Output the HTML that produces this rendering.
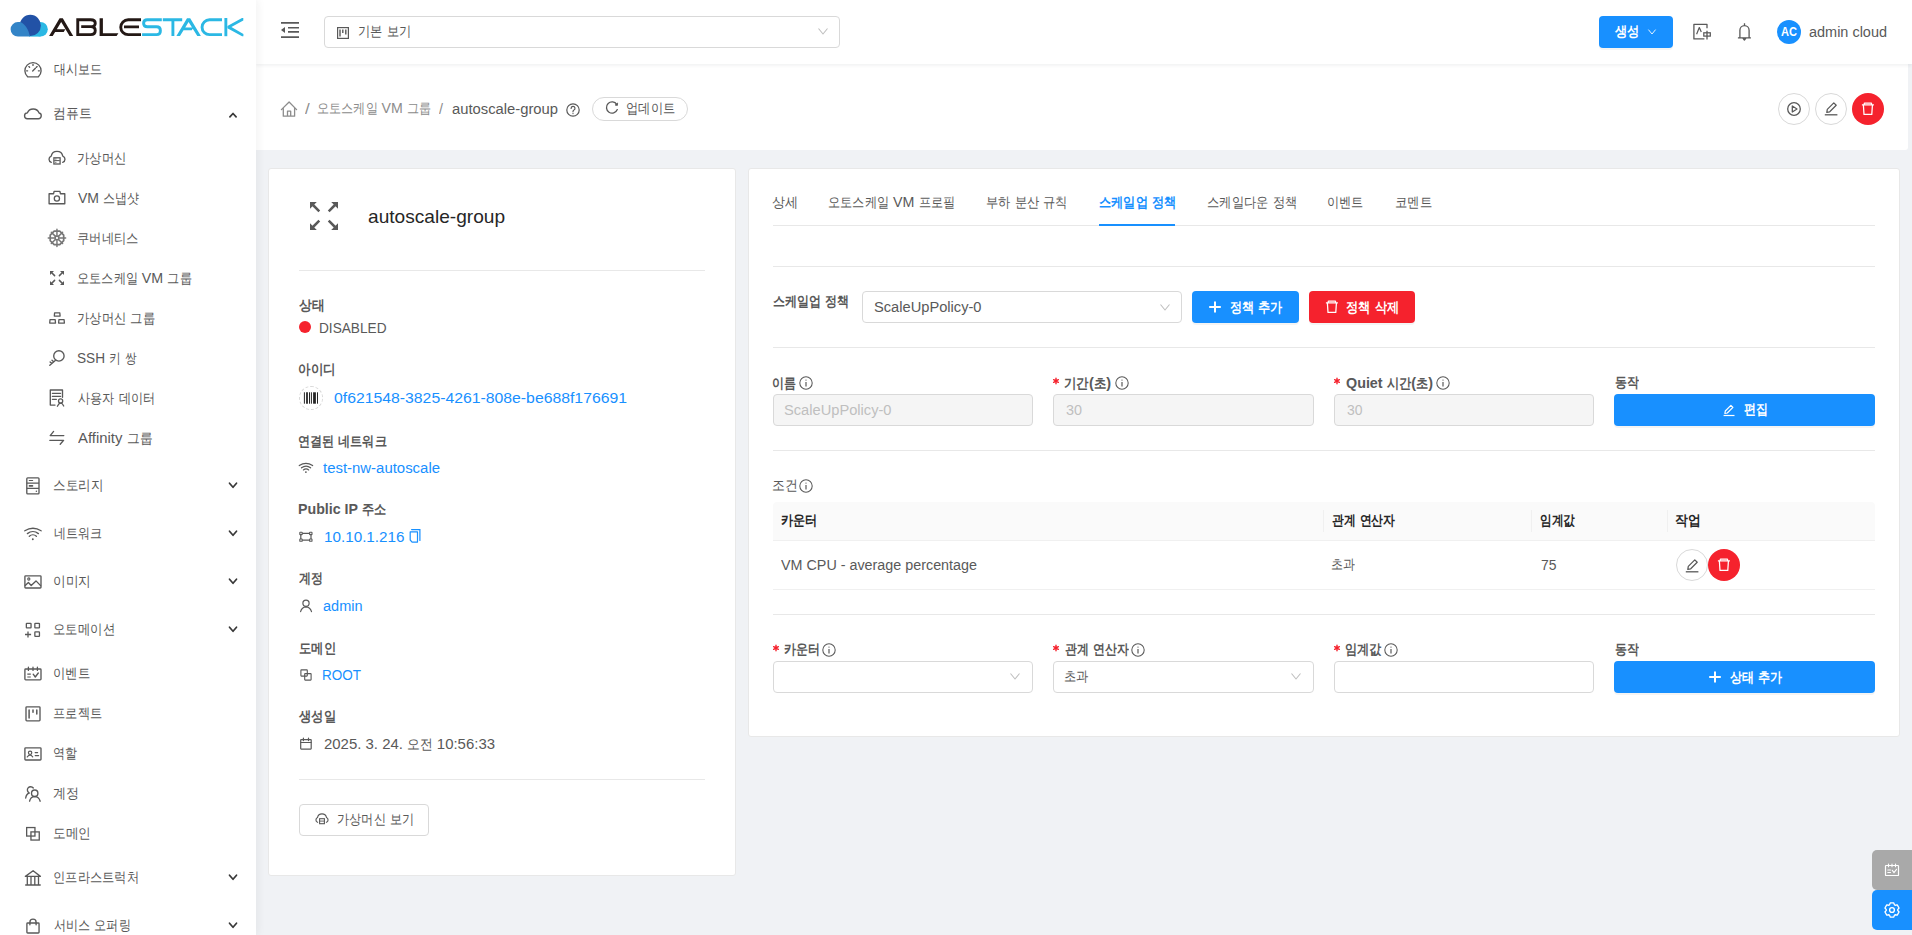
<!DOCTYPE html>
<html lang="ko"><head><meta charset="utf-8"><title>autoscale-group</title>
<style>
html,body{margin:0;padding:0;width:1912px;height:935px;overflow:hidden;font-family:"Liberation Sans",sans-serif;}
svg{overflow:visible}
</style></head><body>
<div style="position:absolute;left:0px;top:0px;width:1912px;height:935px;background:#f0f2f5"></div>
<div style="position:absolute;left:256px;top:64px;width:1652px;height:86px;background:#fff;border-bottom-right-radius:3px"></div>
<div style="position:absolute;left:256px;top:0px;width:1656px;height:64px;background:#fff;box-shadow:0 1px 4px rgba(0,21,41,.08)"></div>
<div style="position:absolute;left:0px;top:0px;width:256px;height:935px;background:#fff;box-shadow:2px 0 8px 0 rgba(29,35,41,.06);z-index:2"></div>
<div style="position:absolute;left:0;top:0;width:256px;height:935px;z-index:3">
<svg style="position:absolute;left:0px;top:0px;" width="256" height="50" viewBox="0 0 256 50" fill="none" stroke="#595959" color="#595959">
  <g stroke="none">
   <circle cx="40.45" cy="29.25" r="7.35" fill="#2bb8e4"/>
   <rect x="29" y="29" width="11.5" height="7.6" fill="#2bb8e4"/>
   <circle cx="30.3" cy="25.4" r="10.6" fill="#2252a6"/>
   <path d="M17.9 36.6 A7.3 7.3 0 0 1 17.9 22 Q19.2 21.8 20.2 22.1 C24.8 23.6 28.8 29.5 29.9 36.6 Z" fill="#3384c7"/>
  </g>
  <g fill="#231815" stroke="none">
   <path d="M49.1 36.1 L59.6 18.3 H62.8 L73.2 36.1 H69.6 L61.2 21.9 L52.7 36.1 Z M54.6 29.3 H65.4 L63.7 32.1 H52.9 Z"/>
   <path d="M99.6 18.3 H102.9 V33.2 H118.4 L116.6 36.1 H99.6 Z"/>
  </g>
  <g stroke="#231815" stroke-width="2.9" fill="none">
   <path d="M77.75 18.3 V36.1 M77.75 19.75 H90.6 Q95.25 19.75 95.25 23.2 Q95.25 26.65 90.8 26.65 H81.2 M90.8 26.65 Q95.25 26.65 95.25 30.6 Q95.25 34.65 90.6 34.65 H77.75"/>
   <path d="M141 19.75 H128.2 A7.45 7.45 0 0 0 128.2 34.65 H141 M124 26.9 H139"/>
  </g>
  <g stroke="#2bb8e4" stroke-width="2.9" fill="none">
   <path d="M161.8 19.75 H147.3 Q143.6 19.75 143.6 23.3 Q143.6 26.8 147.3 26.8 H156.6 Q160.4 26.8 160.4 30.7 Q160.4 34.65 156.6 34.65 H142.1"/>
   <path d="M162.8 19.75 H182.2 M172.9 19.75 V36.1"/>
   <path d="M222 19.75 H209.5 A7.45 7.45 0 0 0 209.5 34.65 H222"/>
   <path d="M225.85 18 V36.2"/>
  </g>
  <g fill="#2bb8e4" stroke="none">
   <path d="M176.4 36.1 L187 18.3 H190.2 L200.9 36.1 H197.3 L188.6 21.9 L180 36.1 Z M183.3 27.4 H193.4 L191.8 30.2 H181.6 Z"/>
   <path d="M227.4 26 L242 17.9 H243.3 L243.3 20.4 L231.4 27.1 L243.4 33.9 V36.3 H242.1 L227.4 28.3 Z"/>
  </g></svg>
<svg style="position:absolute;left:20px;top:56px;" width="26" height="26" viewBox="0 0 26 26" fill="none" stroke="#595959" color="#595959"><path d="M7.6 20.8 A8.1 8.1 0 1 1 18.4 20.8 Z" stroke-width="1.35" stroke-linecap="round" stroke-linejoin="round"/><path d="M13 8.3 V9.4 M8.9 10.6 L9.6 11.3 M17.1 10.6 L16.4 11.3 M6.6 14.8 H7.6 M19.4 14.8 H18.4 M12.7 15 L15.4 12.3" stroke-width="1.35" stroke-linecap="round" stroke-linejoin="round"/></svg>
<div style="position:absolute;left:54.00px;top:62.2px;font-size:14px;line-height:14px;color:#595959;white-space:nowrap;transform:scaleX(1.0004);transform-origin:0 0;"><span style="display:inline-flex;justify-content:center;width:12.0px;transform:scaleX(.857)">대</span><span style="display:inline-flex;justify-content:center;width:12.0px;transform:scaleX(.857)">시</span><span style="display:inline-flex;justify-content:center;width:12.0px;transform:scaleX(.857)">보</span><span style="display:inline-flex;justify-content:center;width:12.0px;transform:scaleX(.857)">드</span></div>
<svg style="position:absolute;left:20px;top:100px;" width="26" height="26" viewBox="0 0 26 26" fill="none" stroke="#595959" color="#595959"><path d="M7.6 18.7 H18.4 A2.9 2.9 0 0 0 19.1 13 A6.4 6.4 0 0 0 7.3 12.9 A2.9 2.9 0 0 0 7.6 18.7 Z" stroke-width="1.35" stroke-linecap="round" stroke-linejoin="round"/></svg>
<div style="position:absolute;left:52.99px;top:105.8px;font-size:14px;line-height:14px;color:#595959;white-space:nowrap;transform:scaleX(1.0710);transform-origin:0 0;"><span style="display:inline-flex;justify-content:center;width:12.0px;transform:scaleX(.857)">컴</span><span style="display:inline-flex;justify-content:center;width:12.0px;transform:scaleX(.857)">퓨</span><span style="display:inline-flex;justify-content:center;width:12.0px;transform:scaleX(.857)">트</span></div>
<svg style="position:absolute;left:228px;top:111.5px;" width="10" height="7" viewBox="0 0 10 7" fill="none" stroke="#383838" color="#383838"><path d="M1.9 4.9 L5 1.5 L8.1 4.9" stroke-width="1.7" stroke-linecap="round" stroke-linejoin="round"/></svg>
<svg style="position:absolute;left:44px;top:146px;" width="26" height="26" viewBox="0 0 26 26" fill="none" stroke="#595959" color="#595959"><path d="M7.3 16.3 A3.2 3.2 0 0 1 7.2 10.2 A5.9 5.9 0 0 1 18.8 10.2 A3.2 3.2 0 0 1 18.7 16.3" stroke-width="1.35" stroke-linecap="round" stroke-linejoin="round"/><rect x="9.9" y="11.8" width="6.2" height="6.2" stroke-width="1.3"/><path d="M10.2 14.6 H15.8" stroke-width="1"/><path d="M11 13 H12.5 M11 16.3 H12.5" stroke-width="0.8"/></svg>
<div style="position:absolute;left:77.02px;top:150.5px;font-size:14px;line-height:14px;color:#595959;white-space:nowrap;transform:scaleX(1.0327);transform-origin:0 0;"><span style="display:inline-flex;justify-content:center;width:12.0px;transform:scaleX(.857)">가</span><span style="display:inline-flex;justify-content:center;width:12.0px;transform:scaleX(.857)">상</span><span style="display:inline-flex;justify-content:center;width:12.0px;transform:scaleX(.857)">머</span><span style="display:inline-flex;justify-content:center;width:12.0px;transform:scaleX(.857)">신</span></div>
<svg style="position:absolute;left:44px;top:185px;" width="26" height="26" viewBox="0 0 26 26" fill="none" stroke="#595959" color="#595959"><path d="M5.1 8.7 H9.6 L10.1 6.3 H15.9 L16.4 8.7 H20.8 V18.7 H5.1 Z" stroke-width="1.35" stroke-linecap="round" stroke-linejoin="round"/><circle cx="12.9" cy="13.5" r="2.6" stroke-width="1.3"/></svg>
<div style="position:absolute;left:78.00px;top:190.5px;font-size:14px;line-height:14px;color:#595959;white-space:nowrap;transform:scaleX(1.0019);transform-origin:0 0;">VM <span style="display:inline-flex;justify-content:center;width:12.0px;transform:scaleX(.857)">스</span><span style="display:inline-flex;justify-content:center;width:12.0px;transform:scaleX(.857)">냅</span><span style="display:inline-flex;justify-content:center;width:12.0px;transform:scaleX(.857)">샷</span></div>
<svg style="position:absolute;left:44px;top:226px;" width="26" height="26" viewBox="0 0 26 26" fill="none" stroke="#595959" color="#595959"><g opacity=".82"><path d="M15.74 5.16 L19.69 9.11 L19.69 14.69 L15.74 18.64 L10.16 18.64 L6.21 14.69 L6.21 9.11 L10.16 5.16 Z" stroke-width="1.7" stroke-linejoin="round"/><path d="M12.95 10.10 L12.95 3.20 M14.22 10.63 L18.61 6.24 M14.75 11.90 L21.65 11.90 M14.22 13.17 L18.61 17.56 M12.95 13.70 L12.95 20.60 M11.68 13.17 L7.29 17.56 M11.15 11.90 L4.25 11.90 M11.68 10.63 L7.29 6.24" stroke-width="1.45" stroke-linecap="round"/><rect x="11.25" y="10.2" width="3.4" height="3.4" stroke-width="1.3"/></g></svg>
<div style="position:absolute;left:76.99px;top:230.5px;font-size:14px;line-height:14px;color:#595959;white-space:nowrap;transform:scaleX(1.0253);transform-origin:0 0;"><span style="display:inline-flex;justify-content:center;width:12.0px;transform:scaleX(.857)">쿠</span><span style="display:inline-flex;justify-content:center;width:12.0px;transform:scaleX(.857)">버</span><span style="display:inline-flex;justify-content:center;width:12.0px;transform:scaleX(.857)">네</span><span style="display:inline-flex;justify-content:center;width:12.0px;transform:scaleX(.857)">티</span><span style="display:inline-flex;justify-content:center;width:12.0px;transform:scaleX(.857)">스</span></div>
<svg style="position:absolute;left:44px;top:265px;" width="26" height="26" viewBox="0 0 26 26" fill="none" stroke="#595959" color="#595959"><path d="M6 6 H10 L6 10 Z M20 6 H16 L20 10 Z M6 20 H10 L6 16 Z M20 20 H16 L20 16 Z" fill="currentColor" stroke="none"/><path d="M7.5 7.5 L10.6 10.6 M18.5 7.5 L15.4 10.6 M7.5 18.5 L10.6 15.4 M18.5 18.5 L15.4 15.4" stroke-width="1.5" stroke-linecap="round"/></svg>
<div style="position:absolute;left:77.01px;top:270.5px;font-size:14px;line-height:14px;color:#595959;white-space:nowrap;transform:scaleX(1.0154);transform-origin:0 0;"><span style="display:inline-flex;justify-content:center;width:12.0px;transform:scaleX(.857)">오</span><span style="display:inline-flex;justify-content:center;width:12.0px;transform:scaleX(.857)">토</span><span style="display:inline-flex;justify-content:center;width:12.0px;transform:scaleX(.857)">스</span><span style="display:inline-flex;justify-content:center;width:12.0px;transform:scaleX(.857)">케</span><span style="display:inline-flex;justify-content:center;width:12.0px;transform:scaleX(.857)">일</span> VM <span style="display:inline-flex;justify-content:center;width:12.0px;transform:scaleX(.857)">그</span><span style="display:inline-flex;justify-content:center;width:12.0px;transform:scaleX(.857)">룹</span></div>
<svg style="position:absolute;left:44px;top:305px;" width="26" height="26" viewBox="0 0 26 26" fill="none" stroke="#595959" color="#595959"><path d="M10.6 7.8 H15.8 L16.1 11.1 H10.3 Z M6 14.7 H11.2 L11.5 18.1 H5.7 Z M14.9 14.7 H20.1 L20.4 18.1 H14.6 Z" stroke-width="1.3" stroke-linejoin="round"/></svg>
<div style="position:absolute;left:76.98px;top:310.5px;font-size:14px;line-height:14px;color:#595959;white-space:nowrap;transform:scaleX(1.0287);transform-origin:0 0;"><span style="display:inline-flex;justify-content:center;width:12.0px;transform:scaleX(.857)">가</span><span style="display:inline-flex;justify-content:center;width:12.0px;transform:scaleX(.857)">상</span><span style="display:inline-flex;justify-content:center;width:12.0px;transform:scaleX(.857)">머</span><span style="display:inline-flex;justify-content:center;width:12.0px;transform:scaleX(.857)">신</span> <span style="display:inline-flex;justify-content:center;width:12.0px;transform:scaleX(.857)">그</span><span style="display:inline-flex;justify-content:center;width:12.0px;transform:scaleX(.857)">룹</span></div>
<svg style="position:absolute;left:44px;top:345px;" width="26" height="26" viewBox="0 0 26 26" fill="none" stroke="#595959" color="#595959"><circle cx="14.9" cy="10.9" r="5.2" stroke-width="1.35" stroke-linecap="round" stroke-linejoin="round"/><path d="M11.3 15.4 L5.8 20.2 M6.1 17 L7.7 18.5 M8 15.3 L9.6 16.8" stroke-width="1.35" stroke-linecap="round" stroke-linejoin="round"/></svg>
<div style="position:absolute;left:77.00px;top:350.5px;font-size:14px;line-height:14px;color:#595959;white-space:nowrap;transform:scaleX(0.9739);transform-origin:0 0;">SSH <span style="display:inline-flex;justify-content:center;width:12.0px;transform:scaleX(.857)">키</span> <span style="display:inline-flex;justify-content:center;width:12.0px;transform:scaleX(.857)">쌍</span></div>
<svg style="position:absolute;left:44px;top:385px;" width="26" height="26" viewBox="0 0 26 26" fill="none" stroke="#595959" color="#595959"><path d="M11 20.1 H6.3 V5 H18.5 V12.2" stroke-width="1.35" stroke-linecap="round" stroke-linejoin="round"/><path d="M8.4 8.3 H16.6 M8.4 11.4 H16.6 M8.4 14.3 H12.4" stroke-width="1.3" stroke-linecap="round"/><circle cx="16.6" cy="16" r="2.1" stroke-width="1.3"/><path d="M13.4 21.2 Q14.8 18.2 16.6 18.2 Q18.4 18.2 19.7 21" stroke-width="1.3" stroke-linecap="round"/></svg>
<div style="position:absolute;left:78.00px;top:390.5px;font-size:14px;line-height:14px;color:#595959;white-space:nowrap;transform:scaleX(1.0148);transform-origin:0 0;"><span style="display:inline-flex;justify-content:center;width:12.0px;transform:scaleX(.857)">사</span><span style="display:inline-flex;justify-content:center;width:12.0px;transform:scaleX(.857)">용</span><span style="display:inline-flex;justify-content:center;width:12.0px;transform:scaleX(.857)">자</span> <span style="display:inline-flex;justify-content:center;width:12.0px;transform:scaleX(.857)">데</span><span style="display:inline-flex;justify-content:center;width:12.0px;transform:scaleX(.857)">이</span><span style="display:inline-flex;justify-content:center;width:12.0px;transform:scaleX(.857)">터</span></div>
<svg style="position:absolute;left:44px;top:425px;" width="26" height="26" viewBox="0 0 26 26" fill="none" stroke="#595959" color="#595959"><path d="M6.2 10.6 H19.8 M6.2 10.6 L9.6 6.4 M5.8 15.3 H19.6 L16.2 19.3" stroke-width="1.35" stroke-linecap="round" stroke-linejoin="round"/></svg>
<div style="position:absolute;left:78.00px;top:430.5px;font-size:14px;line-height:14px;color:#595959;white-space:nowrap;transform:scaleX(1.0624);transform-origin:0 0;">Affinity <span style="display:inline-flex;justify-content:center;width:12.0px;transform:scaleX(.857)">그</span><span style="display:inline-flex;justify-content:center;width:12.0px;transform:scaleX(.857)">룹</span></div>
<svg style="position:absolute;left:20px;top:472px;" width="26" height="26" viewBox="0 0 26 26" fill="none" stroke="#595959" color="#595959"><rect x="6.8" y="5.8" width="12.2" height="16.1" rx="0.9" stroke-width="1.35"/><path d="M6.8 11.2 H19 M6.8 16.4 H19" stroke-width="1.3"/><path d="M9.3 8.5 H12.6" stroke-width="1.2" stroke-linecap="round"/><path d="M9.4 13.9 H12.5" stroke-width="1.6" stroke-linecap="round"/><circle cx="16.4" cy="19.3" r="0.75" fill="currentColor" stroke="none"/></svg>
<div style="position:absolute;left:53.02px;top:477.8px;font-size:14px;line-height:14px;color:#595959;white-space:nowrap;transform:scaleX(1.0435);transform-origin:0 0;"><span style="display:inline-flex;justify-content:center;width:12.0px;transform:scaleX(.857)">스</span><span style="display:inline-flex;justify-content:center;width:12.0px;transform:scaleX(.857)">토</span><span style="display:inline-flex;justify-content:center;width:12.0px;transform:scaleX(.857)">리</span><span style="display:inline-flex;justify-content:center;width:12.0px;transform:scaleX(.857)">지</span></div>
<svg style="position:absolute;left:228px;top:481.7px;" width="10" height="7" viewBox="0 0 10 7" fill="none" stroke="#383838" color="#383838"><path d="M1.5 1.2 L5 5.3 L8.5 1.2" stroke-width="1.7" stroke-linecap="round" stroke-linejoin="round"/></svg>
<svg style="position:absolute;left:20px;top:520px;" width="26" height="26" viewBox="0 0 26 26" fill="none" stroke="#595959" color="#595959"><path d="M4.8 10.8 A15.2 15.2 0 0 1 21.1 10.8 M7.4 13.6 A8.85 8.85 0 0 1 18.4 13.6 M9.3 16.3 A5.2 5.2 0 0 1 16.4 16.3" stroke-width="1.35" stroke-linecap="round" stroke-linejoin="round"/><circle cx="12.8" cy="19.2" r="0.95" fill="currentColor" stroke="none"/></svg>
<div style="position:absolute;left:54.00px;top:526.3px;font-size:14px;line-height:14px;color:#595959;white-space:nowrap;transform:scaleX(1.0000);transform-origin:0 0;"><span style="display:inline-flex;justify-content:center;width:12.0px;transform:scaleX(.857)">네</span><span style="display:inline-flex;justify-content:center;width:12.0px;transform:scaleX(.857)">트</span><span style="display:inline-flex;justify-content:center;width:12.0px;transform:scaleX(.857)">워</span><span style="display:inline-flex;justify-content:center;width:12.0px;transform:scaleX(.857)">크</span></div>
<svg style="position:absolute;left:228px;top:530.1999999999999px;" width="10" height="7" viewBox="0 0 10 7" fill="none" stroke="#383838" color="#383838"><path d="M1.5 1.2 L5 5.3 L8.5 1.2" stroke-width="1.7" stroke-linecap="round" stroke-linejoin="round"/></svg>
<svg style="position:absolute;left:20px;top:568px;" width="26" height="26" viewBox="0 0 26 26" fill="none" stroke="#595959" color="#595959"><rect x="4.9" y="7.8" width="16.1" height="12.2" rx="0.8" stroke-width="1.35"/><path d="M5.2 17.4 L8.4 14.5 L11.2 17.5 L16 12.9 L20.6 17.6" stroke-width="1.35" stroke-linecap="round" stroke-linejoin="round"/><circle cx="8.8" cy="11" r="1.1" stroke-width="1.1"/></svg>
<div style="position:absolute;left:53.01px;top:574.3px;font-size:14px;line-height:14px;color:#595959;white-space:nowrap;transform:scaleX(1.0576);transform-origin:0 0;"><span style="display:inline-flex;justify-content:center;width:12.0px;transform:scaleX(.857)">이</span><span style="display:inline-flex;justify-content:center;width:12.0px;transform:scaleX(.857)">미</span><span style="display:inline-flex;justify-content:center;width:12.0px;transform:scaleX(.857)">지</span></div>
<svg style="position:absolute;left:228px;top:578.1999999999999px;" width="10" height="7" viewBox="0 0 10 7" fill="none" stroke="#383838" color="#383838"><path d="M1.5 1.2 L5 5.3 L8.5 1.2" stroke-width="1.7" stroke-linecap="round" stroke-linejoin="round"/></svg>
<svg style="position:absolute;left:20px;top:616px;" width="26" height="26" viewBox="0 0 26 26" fill="none" stroke="#595959" color="#595959"><rect x="6.35" y="7.35" width="4.7" height="4.6" rx="0.5" stroke-width="1.3"/><rect x="14.85" y="7.35" width="4.6" height="4.6" rx="0.5" stroke-width="1.3"/><rect x="14.85" y="15.95" width="4.6" height="4.5" rx="0.5" stroke-width="1.3"/><path d="M5 18.5 H11.1 M8 15.4 V21.5" stroke-width="1.3"/></svg>
<div style="position:absolute;left:53.01px;top:621.9px;font-size:14px;line-height:14px;color:#595959;white-space:nowrap;transform:scaleX(1.0341);transform-origin:0 0;"><span style="display:inline-flex;justify-content:center;width:12.0px;transform:scaleX(.857)">오</span><span style="display:inline-flex;justify-content:center;width:12.0px;transform:scaleX(.857)">토</span><span style="display:inline-flex;justify-content:center;width:12.0px;transform:scaleX(.857)">메</span><span style="display:inline-flex;justify-content:center;width:12.0px;transform:scaleX(.857)">이</span><span style="display:inline-flex;justify-content:center;width:12.0px;transform:scaleX(.857)">션</span></div>
<svg style="position:absolute;left:228px;top:625.8px;" width="10" height="7" viewBox="0 0 10 7" fill="none" stroke="#383838" color="#383838"><path d="M1.5 1.2 L5 5.3 L8.5 1.2" stroke-width="1.7" stroke-linecap="round" stroke-linejoin="round"/></svg>
<svg style="position:absolute;left:20px;top:660px;" width="26" height="26" viewBox="0 0 26 26" fill="none" stroke="#595959" color="#595959"><rect x="4.9" y="9" width="16.1" height="10.9" rx="0.8" stroke-width="1.35"/><path d="M8.4 7.2 V10.4 M13 7.2 V10.4 M17.4 7.2 V10.4" stroke-width="1.3" stroke-linecap="round"/><path d="M7.3 14.2 H10.8 M7.3 17 H10.8" stroke-width="1.2"/><path d="M13.2 14.2 L15.3 17 L18.3 13" stroke-width="1.35" stroke-linecap="round" stroke-linejoin="round"/></svg>
<div style="position:absolute;left:53.01px;top:665.5px;font-size:14px;line-height:14px;color:#595959;white-space:nowrap;transform:scaleX(1.0283);transform-origin:0 0;"><span style="display:inline-flex;justify-content:center;width:12.0px;transform:scaleX(.857)">이</span><span style="display:inline-flex;justify-content:center;width:12.0px;transform:scaleX(.857)">벤</span><span style="display:inline-flex;justify-content:center;width:12.0px;transform:scaleX(.857)">트</span></div>
<svg style="position:absolute;left:20px;top:700px;" width="26" height="26" viewBox="0 0 26 26" fill="none" stroke="#595959" color="#595959"><rect x="6" y="6.8" width="14" height="14" rx="0.8" stroke-width="1.35"/><path d="M9.1 10 V18 M13 10 V12.3 M16.8 10 V14" stroke-width="1.5" stroke-linecap="round"/></svg>
<div style="position:absolute;left:52.99px;top:705.5px;font-size:14px;line-height:14px;color:#595959;white-space:nowrap;transform:scaleX(1.0213);transform-origin:0 0;"><span style="display:inline-flex;justify-content:center;width:12.0px;transform:scaleX(.857)">프</span><span style="display:inline-flex;justify-content:center;width:12.0px;transform:scaleX(.857)">로</span><span style="display:inline-flex;justify-content:center;width:12.0px;transform:scaleX(.857)">젝</span><span style="display:inline-flex;justify-content:center;width:12.0px;transform:scaleX(.857)">트</span></div>
<svg style="position:absolute;left:20px;top:740px;" width="26" height="26" viewBox="0 0 26 26" fill="none" stroke="#595959" color="#595959"><rect x="4.9" y="7.8" width="16.1" height="12.2" rx="0.8" stroke-width="1.35"/><circle cx="10.1" cy="12.8" r="1.7" stroke-width="1.2"/><path d="M7.3 16.9 Q10 13.6 12.7 16.8 M15.2 12.5 H17.6 M15.2 15.5 H18.6" stroke-width="1.25" stroke-linecap="round"/></svg>
<div style="position:absolute;left:53.06px;top:745.5px;font-size:14px;line-height:14px;color:#595959;white-space:nowrap;transform:scaleX(1.0028);transform-origin:0 0;"><span style="display:inline-flex;justify-content:center;width:12.0px;transform:scaleX(.857)">역</span><span style="display:inline-flex;justify-content:center;width:12.0px;transform:scaleX(.857)">할</span></div>
<svg style="position:absolute;left:20px;top:780px;" width="26" height="26" viewBox="0 0 26 26" fill="none" stroke="#595959" color="#595959"><circle cx="14.7" cy="13.2" r="3.2" stroke-width="1.35"/><path d="M9.6 21.2 Q10.5 16.7 14.7 16.6 Q18.9 16.7 20.2 21.2" stroke-width="1.35" stroke-linecap="round" stroke-linejoin="round"/><path d="M13.3 8 A3.3 3.3 0 1 0 9.3 13 Q6.3 14 5.7 18" stroke-width="1.35" stroke-linecap="round" stroke-linejoin="round"/></svg>
<div style="position:absolute;left:53.02px;top:786.0px;font-size:14px;line-height:14px;color:#595959;white-space:nowrap;transform:scaleX(1.0902);transform-origin:0 0;"><span style="display:inline-flex;justify-content:center;width:12.0px;transform:scaleX(.857)">계</span><span style="display:inline-flex;justify-content:center;width:12.0px;transform:scaleX(.857)">정</span></div>
<svg style="position:absolute;left:20px;top:820px;" width="26" height="26" viewBox="0 0 26 26" fill="none" stroke="#595959" color="#595959"><rect x="6.65" y="7.55" width="8.3" height="8.5" stroke-width="1.3"/><rect x="10.95" y="11.9" width="8.3" height="8.15" stroke-width="1.3"/></svg>
<div style="position:absolute;left:52.98px;top:826.3px;font-size:14px;line-height:14px;color:#595959;white-space:nowrap;transform:scaleX(1.0585);transform-origin:0 0;"><span style="display:inline-flex;justify-content:center;width:12.0px;transform:scaleX(.857)">도</span><span style="display:inline-flex;justify-content:center;width:12.0px;transform:scaleX(.857)">메</span><span style="display:inline-flex;justify-content:center;width:12.0px;transform:scaleX(.857)">인</span></div>
<svg style="position:absolute;left:20px;top:864px;" width="26" height="26" viewBox="0 0 26 26" fill="none" stroke="#595959" color="#595959"><path d="M5.4 12.4 L13.1 6.8 L20.4 12.4 Z" stroke-width="1.35" stroke-linecap="round" stroke-linejoin="round"/><path d="M7.3 12.6 V20.6 M11 12.6 V20.6 M14.8 12.6 V20.6 M18.5 12.6 V20.6 M5.2 21 H20.7" stroke-width="1.3"/></svg>
<div style="position:absolute;left:53.00px;top:870.0px;font-size:14px;line-height:14px;color:#595959;white-space:nowrap;transform:scaleX(1.0241);transform-origin:0 0;"><span style="display:inline-flex;justify-content:center;width:12.0px;transform:scaleX(.857)">인</span><span style="display:inline-flex;justify-content:center;width:12.0px;transform:scaleX(.857)">프</span><span style="display:inline-flex;justify-content:center;width:12.0px;transform:scaleX(.857)">라</span><span style="display:inline-flex;justify-content:center;width:12.0px;transform:scaleX(.857)">스</span><span style="display:inline-flex;justify-content:center;width:12.0px;transform:scaleX(.857)">트</span><span style="display:inline-flex;justify-content:center;width:12.0px;transform:scaleX(.857)">럭</span><span style="display:inline-flex;justify-content:center;width:12.0px;transform:scaleX(.857)">처</span></div>
<svg style="position:absolute;left:228px;top:873.9px;" width="10" height="7" viewBox="0 0 10 7" fill="none" stroke="#383838" color="#383838"><path d="M1.5 1.2 L5 5.3 L8.5 1.2" stroke-width="1.7" stroke-linecap="round" stroke-linejoin="round"/></svg>
<svg style="position:absolute;left:20px;top:909px;" width="26" height="26" viewBox="0 0 26 26" fill="none" stroke="#595959" color="#595959"><rect x="6.9" y="13.95" width="12.15" height="10" rx="0.8" stroke-width="1.35"/><path d="M9.9 15.7 V13.2 A3.1 3.1 0 0 1 16.1 13.2 V15.7" stroke-width="1.35" stroke-linecap="round" stroke-linejoin="round"/></svg>
<div style="position:absolute;left:54.00px;top:918.2px;font-size:14px;line-height:14px;color:#595959;white-space:nowrap;transform:scaleX(1.0081);transform-origin:0 0;"><span style="display:inline-flex;justify-content:center;width:12.0px;transform:scaleX(.857)">서</span><span style="display:inline-flex;justify-content:center;width:12.0px;transform:scaleX(.857)">비</span><span style="display:inline-flex;justify-content:center;width:12.0px;transform:scaleX(.857)">스</span> <span style="display:inline-flex;justify-content:center;width:12.0px;transform:scaleX(.857)">오</span><span style="display:inline-flex;justify-content:center;width:12.0px;transform:scaleX(.857)">퍼</span><span style="display:inline-flex;justify-content:center;width:12.0px;transform:scaleX(.857)">링</span></div>
<svg style="position:absolute;left:228px;top:922.1px;" width="10" height="7" viewBox="0 0 10 7" fill="none" stroke="#383838" color="#383838"><path d="M1.5 1.2 L5 5.3 L8.5 1.2" stroke-width="1.7" stroke-linecap="round" stroke-linejoin="round"/></svg>
</div>
<svg style="position:absolute;left:281px;top:22px;" width="18" height="16" viewBox="0 0 18 16" fill="none" stroke="#595959" color="#595959"><path d="M0 0.9 H18 M7 5.7 H18 M7 9.9 H18 M0 15.1 H18" stroke-width="1.6"/><path d="M0 8 L4 5 V11 Z" fill="currentColor" stroke="none"/></svg>
<div style="position:absolute;left:324px;top:16px;width:516px;height:32px;box-sizing:border-box;border:1px solid #d9d9d9;border-radius:4px;background:#fff"></div>
<svg style="position:absolute;left:337px;top:27px;" width="12" height="12" viewBox="0 0 12 12" fill="none" stroke="#595959" color="#595959"><rect x="0.6" y="0.6" width="10.8" height="10.8" stroke-width="1.2"/><path d="M3 2.6 V9.4 M5.8 2.6 V6 M8.8 2.6 V7.6" stroke-width="1.4"/></svg>
<div style="position:absolute;left:358.01px;top:24.2px;font-size:14px;line-height:14px;color:#595959;white-space:nowrap;transform:scaleX(1.0221);transform-origin:0 0;"><span style="display:inline-flex;justify-content:center;width:12.0px;transform:scaleX(.857)">기</span><span style="display:inline-flex;justify-content:center;width:12.0px;transform:scaleX(.857)">본</span> <span style="display:inline-flex;justify-content:center;width:12.0px;transform:scaleX(.857)">보</span><span style="display:inline-flex;justify-content:center;width:12.0px;transform:scaleX(.857)">기</span></div>
<svg style="position:absolute;left:818px;top:28px;" width="10" height="7" viewBox="0 0 10 7" fill="none" stroke="#bfbfbf" color="#bfbfbf"><path d="M0.5 0.5 L5 6 L9.5 0.5" stroke-width="1.1"/></svg>
<div style="position:absolute;left:1599px;top:16px;width:74px;height:32px;background:#1890ff;border-radius:4px;box-shadow:0 2px 0 rgba(0,0,0,.045)"></div>
<div style="position:absolute;left:1615.00px;top:24.3px;font-size:14px;line-height:14px;color:#fff;white-space:nowrap;font-weight:700;transform:scaleX(1.0218);transform-origin:0 0;"><span style="display:inline-flex;justify-content:center;width:12.0px;transform:scaleX(.857)">생</span><span style="display:inline-flex;justify-content:center;width:12.0px;transform:scaleX(.857)">성</span></div>
<svg style="position:absolute;left:1648px;top:29px;" width="8" height="6" viewBox="0 0 10 7" fill="none" stroke="#fff" color="#fff"><path d="M0.5 0.5 L5 6 L9.5 0.5" stroke-width="1.1"/></svg>
<svg style="position:absolute;left:1688px;top:18px;" width="68" height="28" viewBox="0 0 68 28" fill="none" stroke="#595959" color="#595959"><path d="M19 10.3 V6.4 H5.9 V20.9 H16.4" stroke-width="1.3" stroke-linejoin="round"/><path d="M8.6 16.2 L11.3 9.5 L13.3 14" stroke-width="1.2" stroke-linejoin="round"/><rect x="15.8" y="14.8" width="6.5" height="3.3" stroke-width="1.25"/><path d="M19 12.7 V21.5" stroke-width="1.3"/><path d="M51.9 19.7 V12.3 A4.6 4.6 0 0 1 61.1 12.3 V19.7 M49.9 19.8 H62.9 M56.5 5.3 V7.2 M54.9 20 L56.4 22 L57.9 20" stroke-width="1.3" stroke-linejoin="round"/></svg>
<div style="position:absolute;left:1777px;top:20px;width:24px;height:24px;background:#1890ff;border-radius:50%"></div>
<div style="position:absolute;left:1781.00px;top:25.8px;font-size:12px;line-height:12px;color:#fff;white-space:nowrap;font-weight:700;transform:scaleX(0.9225);transform-origin:0 0;">AC</div>
<div style="position:absolute;left:1809.41px;top:25.3px;font-size:14px;line-height:14px;color:#595959;white-space:nowrap;transform:scaleX(1.0331);transform-origin:0 0;">admin cloud</div>
<svg style="position:absolute;left:276px;top:96px;" width="24" height="24" viewBox="0 0 24 24" fill="none" stroke="#8c8c8c" color="#8c8c8c"><path d="M5.4 13.6 L13.1 6 L20.6 13.6 M7.3 12.3 V20.2 H18.6 V12.3 M11.5 20 V15.2 H14.7 V20" stroke-width="1.3" stroke-linejoin="round" stroke-linecap="round"/></svg>
<div style="position:absolute;left:305.00px;top:102.0px;font-size:14px;line-height:14px;color:#8c8c8c;white-space:nowrap;transform:scaleX(1.2077);transform-origin:0 0;">/</div>
<div style="position:absolute;left:316.62px;top:101.2px;font-size:14px;line-height:14px;color:#8c8c8c;white-space:nowrap;transform:scaleX(1.0109);transform-origin:0 0;"><span style="display:inline-flex;justify-content:center;width:12.0px;transform:scaleX(.857)">오</span><span style="display:inline-flex;justify-content:center;width:12.0px;transform:scaleX(.857)">토</span><span style="display:inline-flex;justify-content:center;width:12.0px;transform:scaleX(.857)">스</span><span style="display:inline-flex;justify-content:center;width:12.0px;transform:scaleX(.857)">케</span><span style="display:inline-flex;justify-content:center;width:12.0px;transform:scaleX(.857)">일</span> VM <span style="display:inline-flex;justify-content:center;width:12.0px;transform:scaleX(.857)">그</span><span style="display:inline-flex;justify-content:center;width:12.0px;transform:scaleX(.857)">룹</span></div>
<div style="position:absolute;left:439.00px;top:102.0px;font-size:14px;line-height:14px;color:#8c8c8c;white-space:nowrap;transform:scaleX(1.0281);transform-origin:0 0;">/</div>
<div style="position:absolute;left:451.61px;top:101.7px;font-size:14px;line-height:14px;color:#595959;white-space:nowrap;transform:scaleX(1.0557);transform-origin:0 0;">autoscale-group</div>
<svg style="position:absolute;left:566px;top:103px;" width="14" height="14" viewBox="0 0 14 14" fill="none" stroke="#595959" color="#595959"><circle cx="7" cy="7" r="6.2" stroke-width="1.2"/><path d="M5.1 5.4 A1.95 1.95 0 1 1 7.7 7.2 Q7 7.6 7 8.5 V8.8" stroke-width="1.2" stroke-linecap="round"/><circle cx="7" cy="10.6" r="0.7" fill="currentColor" stroke="none"/></svg>
<div style="position:absolute;left:592px;top:97px;width:96px;height:24px;box-sizing:border-box;border:1px solid #d9d9d9;border-radius:12px;background:#fff"></div>
<svg style="position:absolute;left:605px;top:101px;" width="14" height="14" viewBox="0 0 14 14" fill="none" stroke="#595959" color="#595959"><path d="M12.3 8.6 A5.6 5.6 0 1 1 11.8 3.5" stroke-width="1.3" stroke-linecap="round"/><path d="M12.6 2 L12.4 4.4 L10.1 4.1 Z" fill="currentColor" stroke="currentColor" stroke-width="0.8" stroke-linejoin="round"/></svg>
<div style="position:absolute;left:625.99px;top:101.3px;font-size:14px;line-height:14px;color:#595959;white-space:nowrap;transform:scaleX(1.0213);transform-origin:0 0;"><span style="display:inline-flex;justify-content:center;width:12.0px;transform:scaleX(.857)">업</span><span style="display:inline-flex;justify-content:center;width:12.0px;transform:scaleX(.857)">데</span><span style="display:inline-flex;justify-content:center;width:12.0px;transform:scaleX(.857)">이</span><span style="display:inline-flex;justify-content:center;width:12.0px;transform:scaleX(.857)">트</span></div>
<div style="position:absolute;left:1778px;top:93px;width:32px;height:32px;box-sizing:border-box;border:1px solid #d9d9d9;border-radius:50%;background:#fff"></div>
<svg style="position:absolute;left:1786px;top:101px;" width="16" height="16" viewBox="0 0 16 16" fill="none" stroke="#595959" color="#595959"><circle cx="8" cy="8" r="6.3" stroke-width="1.3"/><path d="M6.3 5 L11 8 L6.3 11 Z" stroke-width="1.3" stroke-linejoin="round"/></svg>
<div style="position:absolute;left:1815px;top:93px;width:32px;height:32px;box-sizing:border-box;border:1px solid #d9d9d9;border-radius:50%;background:#fff"></div>
<svg style="position:absolute;left:1823px;top:100px;" width="16" height="16" viewBox="0 0 16 16" fill="none" stroke="#595959" color="#595959"><path d="M3.8 12.3 L4.3 9.4 L10.8 2.9 L13.2 5.3 L6.7 11.8 Z" stroke-width="1.25" stroke-linejoin="round"/><path d="M1.8 14.8 H14.4" stroke-width="1.3"/></svg>
<div style="position:absolute;left:1852px;top:93px;width:32px;height:32px;background:#f5222d;border-radius:50%"></div>
<svg style="position:absolute;left:1861px;top:102px;" width="14" height="14" viewBox="0 0 14 14" fill="none" stroke="#fff" color="#fff"><path d="M0.9 2.9 H12.9 M3.2 2.9 L3.2 1.7 Q3.2 1.2 3.7 1.2 H10.1 Q10.6 1.2 10.6 1.7 V2.9 M2.4 3.1 L3 12.4 H10.8 L11.4 3.1" stroke-width="1.25" stroke-linejoin="round"/></svg>
<div style="position:absolute;left:268px;top:168px;width:468px;height:708px;box-sizing:border-box;border:1px solid #e8e8e8;border-radius:3px;background:#fff"></div>
<svg style="position:absolute;left:306px;top:198px;" width="36" height="36" viewBox="0 0 36 36" fill="none" stroke="#595959" color="#595959"><path d="M4 4 H10.8 L4 10.8 Z M32 4 H25.2 L32 10.8 Z M4 32 H10.8 L4 25.2 Z M32 32 H25.2 L32 25.2 Z" fill="currentColor" stroke="none"/><path d="M7 7 L13.3 13.3 M29 7 L22.7 13.3 M7 29 L13.3 22.7 M29 29 L22.7 22.7" stroke-width="2.5"/></svg>
<div style="position:absolute;left:368.01px;top:207px;font-size:19px;line-height:19px;color:#262626;white-space:nowrap;transform:scaleX(1.0055);transform-origin:0 0;">autoscale-group</div>
<div style="position:absolute;left:299px;top:270px;width:406px;height:1px;background:#e8e8e8"></div>
<div style="position:absolute;left:299.00px;top:298.2px;font-size:14px;line-height:14px;color:#595959;white-space:nowrap;font-weight:700;transform:scaleX(1.0675);transform-origin:0 0;"><span style="display:inline-flex;justify-content:center;width:12.0px;transform:scaleX(.857)">상</span><span style="display:inline-flex;justify-content:center;width:12.0px;transform:scaleX(.857)">태</span></div>
<div style="position:absolute;left:299px;top:321px;width:12px;height:12px;background:#f5222d;border-radius:50%"></div>
<div style="position:absolute;left:318.50px;top:321.0px;font-size:14px;line-height:14px;color:#595959;white-space:nowrap;transform:scaleX(0.9751);transform-origin:0 0;">DISABLED</div>
<div style="position:absolute;left:298.03px;top:362.1px;font-size:14px;line-height:14px;color:#595959;white-space:nowrap;font-weight:700;transform:scaleX(1.0442);transform-origin:0 0;"><span style="display:inline-flex;justify-content:center;width:12.0px;transform:scaleX(.857)">아</span><span style="display:inline-flex;justify-content:center;width:12.0px;transform:scaleX(.857)">이</span><span style="display:inline-flex;justify-content:center;width:12.0px;transform:scaleX(.857)">디</span></div>
<div style="position:absolute;left:299px;top:386px;width:24px;height:24px;box-sizing:border-box;border:1px dashed #d9d9d9;border-radius:50%;background:#fff"></div>
<svg style="position:absolute;left:295px;top:384px;" width="32" height="28" viewBox="0 0 32 28" fill="none" stroke="#262626" color="#262626"><path d="M9.4 8.3 V19.7 M14.5 8.3 V19.7 M16.4 8.3 V19.7 M22.5 8.3 V19.7" stroke-width="1"/><path d="M12 8.3 V19.7" stroke-width="1.8"/><path d="M19.5 8.3 V19.7" stroke-width="2.8"/></svg>
<div style="position:absolute;left:333.61px;top:390.6px;font-size:14px;line-height:14px;color:#1890ff;white-space:nowrap;transform:scaleX(1.1269);transform-origin:0 0;">0f621548-3825-4261-808e-be688f176691</div>
<div style="position:absolute;left:298.00px;top:433.5px;font-size:14px;line-height:14px;color:#595959;white-space:nowrap;font-weight:700;transform:scaleX(1.0070);transform-origin:0 0;"><span style="display:inline-flex;justify-content:center;width:12.0px;transform:scaleX(.857)">연</span><span style="display:inline-flex;justify-content:center;width:12.0px;transform:scaleX(.857)">결</span><span style="display:inline-flex;justify-content:center;width:12.0px;transform:scaleX(.857)">된</span> <span style="display:inline-flex;justify-content:center;width:12.0px;transform:scaleX(.857)">네</span><span style="display:inline-flex;justify-content:center;width:12.0px;transform:scaleX(.857)">트</span><span style="display:inline-flex;justify-content:center;width:12.0px;transform:scaleX(.857)">워</span><span style="display:inline-flex;justify-content:center;width:12.0px;transform:scaleX(.857)">크</span></div>
<svg style="position:absolute;left:295px;top:456px;" width="24" height="24" viewBox="0 0 24 24" fill="none" stroke="#595959" color="#595959"><path d="M4.3 9.6 A12 12 0 0 1 17.6 9.6 M6.5 11.8 A7.5 7.5 0 0 1 15.6 11.8 M8.4 13.9 A4.4 4.4 0 0 1 13.7 13.9" stroke-width="1.25" stroke-linecap="round"/><circle cx="10.9" cy="16.1" r="0.9" fill="currentColor" stroke="none"/></svg>
<div style="position:absolute;left:323.20px;top:461.0px;font-size:14px;line-height:14px;color:#1890ff;white-space:nowrap;transform:scaleX(1.0664);transform-origin:0 0;">test-nw-autoscale</div>
<div style="position:absolute;left:298.00px;top:502.2px;font-size:14px;line-height:14px;color:#595959;white-space:nowrap;font-weight:700;transform:scaleX(1.0143);transform-origin:0 0;">Public IP <span style="display:inline-flex;justify-content:center;width:12.0px;transform:scaleX(.857)">주</span><span style="display:inline-flex;justify-content:center;width:12.0px;transform:scaleX(.857)">소</span></div>
<svg style="position:absolute;left:295px;top:524px;" width="24" height="24" viewBox="0 0 24 24" fill="none" stroke="#595959" color="#595959"><path d="M7.2 9.4 H14.6 M7.2 16.2 H14.6 M5.8 10.6 V15 M16 10.6 V15" stroke-width="1.2"/><rect x="4.8" y="8.3" width="2.4" height="2.3" rx="0.4" stroke-width="1.1"/><rect x="14.6" y="8.3" width="2.4" height="2.3" rx="0.4" stroke-width="1.1"/><rect x="4.8" y="15" width="2.4" height="2.3" rx="0.4" stroke-width="1.1"/><rect x="14.6" y="15" width="2.4" height="2.3" rx="0.4" stroke-width="1.1"/></svg>
<div style="position:absolute;left:323.71px;top:529.5px;font-size:14px;line-height:14px;color:#1890ff;white-space:nowrap;transform:scaleX(1.0884);transform-origin:0 0;">10.10.1.216</div>
<svg style="position:absolute;left:404px;top:524px;" width="24" height="24" viewBox="0 0 24 24" fill="none" stroke="#1890ff" color="#1890ff"><path d="M7.6 5.6 H15.9 V16.5" stroke-width="1.2" stroke-linecap="round"/><path d="M6.2 7.9 H13.5 V18.1 H8.1 L6.2 16 Z" stroke-width="1.2" stroke-linejoin="round"/></svg>
<div style="position:absolute;left:299.00px;top:571.2px;font-size:14px;line-height:14px;color:#595959;white-space:nowrap;font-weight:700;transform:scaleX(1.0000);transform-origin:0 0;"><span style="display:inline-flex;justify-content:center;width:12.0px;transform:scaleX(.857)">계</span><span style="display:inline-flex;justify-content:center;width:12.0px;transform:scaleX(.857)">정</span></div>
<svg style="position:absolute;left:295px;top:594px;" width="24" height="24" viewBox="0 0 24 24" fill="none" stroke="#595959" color="#595959"><circle cx="11" cy="9.2" r="3.1" stroke-width="1.2"/><path d="M5.6 17.6 Q6.8 13.1 11 12.9 Q15.2 13.1 16.5 17.6" stroke-width="1.2" stroke-linecap="round"/></svg>
<div style="position:absolute;left:323.00px;top:598.7px;font-size:14px;line-height:14px;color:#1890ff;white-space:nowrap;transform:scaleX(1.0358);transform-origin:0 0;">admin</div>
<div style="position:absolute;left:299.00px;top:640.5px;font-size:14px;line-height:14px;color:#595959;white-space:nowrap;font-weight:700;transform:scaleX(1.0278);transform-origin:0 0;"><span style="display:inline-flex;justify-content:center;width:12.0px;transform:scaleX(.857)">도</span><span style="display:inline-flex;justify-content:center;width:12.0px;transform:scaleX(.857)">메</span><span style="display:inline-flex;justify-content:center;width:12.0px;transform:scaleX(.857)">인</span></div>
<svg style="position:absolute;left:295px;top:663px;" width="24" height="24" viewBox="0 0 24 24" fill="none" stroke="#595959" color="#595959"><rect x="5.9" y="6.9" width="6.4" height="6.2" rx="0.5" stroke-width="1.1"/><rect x="9.7" y="10.6" width="6.4" height="6.5" rx="0.5" stroke-width="1.1"/></svg>
<div style="position:absolute;left:321.99px;top:667.8px;font-size:14px;line-height:14px;color:#1890ff;white-space:nowrap;transform:scaleX(0.9648);transform-origin:0 0;">ROOT</div>
<div style="position:absolute;left:299.00px;top:709.2px;font-size:14px;line-height:14px;color:#595959;white-space:nowrap;font-weight:700;transform:scaleX(1.0278);transform-origin:0 0;"><span style="display:inline-flex;justify-content:center;width:12.0px;transform:scaleX(.857)">생</span><span style="display:inline-flex;justify-content:center;width:12.0px;transform:scaleX(.857)">성</span><span style="display:inline-flex;justify-content:center;width:12.0px;transform:scaleX(.857)">일</span></div>
<svg style="position:absolute;left:295px;top:732px;" width="24" height="24" viewBox="0 0 24 24" fill="none" stroke="#595959" color="#595959"><rect x="5.7" y="7.6" width="10.5" height="9.5" rx="0.5" stroke-width="1.2"/><path d="M5.7 10.5 H16.2 M8.4 6 V8.6 M13.5 6 V8.6" stroke-width="1.2" stroke-linecap="round"/></svg>
<div style="position:absolute;left:323.81px;top:736.7px;font-size:14px;line-height:14px;color:#595959;white-space:nowrap;transform:scaleX(1.0672);transform-origin:0 0;">2025. 3. 24. <span style="display:inline-flex;justify-content:center;width:12.0px;transform:scaleX(.857)">오</span><span style="display:inline-flex;justify-content:center;width:12.0px;transform:scaleX(.857)">전</span> 10:56:33</div>
<div style="position:absolute;left:299px;top:779px;width:406px;height:1px;background:#e8e8e8"></div>
<div style="position:absolute;left:299px;top:804px;width:130px;height:32px;box-sizing:border-box;border:1px solid #d9d9d9;border-radius:4px;background:#fff"></div>
<svg style="position:absolute;left:315px;top:812px;" width="14" height="14" viewBox="0 0 14 14" fill="none" stroke="#595959" color="#595959"><path d="M2.6 10.3 A2.6 2.6 0 0 1 2.5 5.5 A4.6 4.6 0 0 1 11.5 5.5 A2.6 2.6 0 0 1 11.4 10.3" stroke-width="1.15" stroke-linecap="round"/><rect x="4.6" y="6.7" width="4.8" height="5" stroke-width="1.1"/><path d="M4.8 9.1 H9.2" stroke-width="0.9"/></svg>
<div style="position:absolute;left:336.51px;top:812.3px;font-size:14px;line-height:14px;color:#595959;white-space:nowrap;transform:scaleX(1.0153);transform-origin:0 0;"><span style="display:inline-flex;justify-content:center;width:12.0px;transform:scaleX(.857)">가</span><span style="display:inline-flex;justify-content:center;width:12.0px;transform:scaleX(.857)">상</span><span style="display:inline-flex;justify-content:center;width:12.0px;transform:scaleX(.857)">머</span><span style="display:inline-flex;justify-content:center;width:12.0px;transform:scaleX(.857)">신</span> <span style="display:inline-flex;justify-content:center;width:12.0px;transform:scaleX(.857)">보</span><span style="display:inline-flex;justify-content:center;width:12.0px;transform:scaleX(.857)">기</span></div>
<div style="position:absolute;left:748px;top:168px;width:1152px;height:569px;box-sizing:border-box;border:1px solid #e8e8e8;border-radius:3px;background:#fff"></div>
<div style="position:absolute;left:772.20px;top:195.4px;font-size:14px;line-height:14px;color:#595959;white-space:nowrap;transform:scaleX(1.0913);transform-origin:0 0;"><span style="display:inline-flex;justify-content:center;width:12.0px;transform:scaleX(.857)">상</span><span style="display:inline-flex;justify-content:center;width:12.0px;transform:scaleX(.857)">세</span></div>
<div style="position:absolute;left:828.01px;top:195.4px;font-size:14px;line-height:14px;color:#595959;white-space:nowrap;transform:scaleX(1.0179);transform-origin:0 0;"><span style="display:inline-flex;justify-content:center;width:12.0px;transform:scaleX(.857)">오</span><span style="display:inline-flex;justify-content:center;width:12.0px;transform:scaleX(.857)">토</span><span style="display:inline-flex;justify-content:center;width:12.0px;transform:scaleX(.857)">스</span><span style="display:inline-flex;justify-content:center;width:12.0px;transform:scaleX(.857)">케</span><span style="display:inline-flex;justify-content:center;width:12.0px;transform:scaleX(.857)">일</span> VM <span style="display:inline-flex;justify-content:center;width:12.0px;transform:scaleX(.857)">프</span><span style="display:inline-flex;justify-content:center;width:12.0px;transform:scaleX(.857)">로</span><span style="display:inline-flex;justify-content:center;width:12.0px;transform:scaleX(.857)">필</span></div>
<div style="position:absolute;left:985.90px;top:195.4px;font-size:14px;line-height:14px;color:#595959;white-space:nowrap;transform:scaleX(1.0220);transform-origin:0 0;"><span style="display:inline-flex;justify-content:center;width:12.0px;transform:scaleX(.857)">부</span><span style="display:inline-flex;justify-content:center;width:12.0px;transform:scaleX(.857)">하</span> <span style="display:inline-flex;justify-content:center;width:12.0px;transform:scaleX(.857)">분</span><span style="display:inline-flex;justify-content:center;width:12.0px;transform:scaleX(.857)">산</span> <span style="display:inline-flex;justify-content:center;width:12.0px;transform:scaleX(.857)">규</span><span style="display:inline-flex;justify-content:center;width:12.0px;transform:scaleX(.857)">칙</span></div>
<div style="position:absolute;left:1099.00px;top:195.4px;font-size:14px;line-height:14px;color:#1890ff;white-space:nowrap;font-weight:700;transform:scaleX(1.0146);transform-origin:0 0;"><span style="display:inline-flex;justify-content:center;width:12.0px;transform:scaleX(.857)">스</span><span style="display:inline-flex;justify-content:center;width:12.0px;transform:scaleX(.857)">케</span><span style="display:inline-flex;justify-content:center;width:12.0px;transform:scaleX(.857)">일</span><span style="display:inline-flex;justify-content:center;width:12.0px;transform:scaleX(.857)">업</span> <span style="display:inline-flex;justify-content:center;width:12.0px;transform:scaleX(.857)">정</span><span style="display:inline-flex;justify-content:center;width:12.0px;transform:scaleX(.857)">책</span></div>
<div style="position:absolute;left:1206.80px;top:195.4px;font-size:14px;line-height:14px;color:#595959;white-space:nowrap;transform:scaleX(1.0244);transform-origin:0 0;"><span style="display:inline-flex;justify-content:center;width:12.0px;transform:scaleX(.857)">스</span><span style="display:inline-flex;justify-content:center;width:12.0px;transform:scaleX(.857)">케</span><span style="display:inline-flex;justify-content:center;width:12.0px;transform:scaleX(.857)">일</span><span style="display:inline-flex;justify-content:center;width:12.0px;transform:scaleX(.857)">다</span><span style="display:inline-flex;justify-content:center;width:12.0px;transform:scaleX(.857)">운</span> <span style="display:inline-flex;justify-content:center;width:12.0px;transform:scaleX(.857)">정</span><span style="display:inline-flex;justify-content:center;width:12.0px;transform:scaleX(.857)">책</span></div>
<div style="position:absolute;left:1327.33px;top:195.4px;font-size:14px;line-height:14px;color:#595959;white-space:nowrap;transform:scaleX(1.0143);transform-origin:0 0;"><span style="display:inline-flex;justify-content:center;width:12.0px;transform:scaleX(.857)">이</span><span style="display:inline-flex;justify-content:center;width:12.0px;transform:scaleX(.857)">벤</span><span style="display:inline-flex;justify-content:center;width:12.0px;transform:scaleX(.857)">트</span></div>
<div style="position:absolute;left:1395.39px;top:195.4px;font-size:14px;line-height:14px;color:#595959;white-space:nowrap;transform:scaleX(1.0286);transform-origin:0 0;"><span style="display:inline-flex;justify-content:center;width:12.0px;transform:scaleX(.857)">코</span><span style="display:inline-flex;justify-content:center;width:12.0px;transform:scaleX(.857)">멘</span><span style="display:inline-flex;justify-content:center;width:12.0px;transform:scaleX(.857)">트</span></div>
<div style="position:absolute;left:773px;top:225px;width:1102px;height:1px;background:#e8e8e8"></div>
<div style="position:absolute;left:1099px;top:224px;width:76px;height:2px;background:#1890ff"></div>
<div style="position:absolute;left:773px;top:266px;width:1102px;height:1px;background:#e8e8e8"></div>
<div style="position:absolute;left:773.00px;top:294.2px;font-size:14px;line-height:14px;color:#595959;white-space:nowrap;font-weight:700;transform:scaleX(1.0015);transform-origin:0 0;"><span style="display:inline-flex;justify-content:center;width:12.0px;transform:scaleX(.857)">스</span><span style="display:inline-flex;justify-content:center;width:12.0px;transform:scaleX(.857)">케</span><span style="display:inline-flex;justify-content:center;width:12.0px;transform:scaleX(.857)">일</span><span style="display:inline-flex;justify-content:center;width:12.0px;transform:scaleX(.857)">업</span> <span style="display:inline-flex;justify-content:center;width:12.0px;transform:scaleX(.857)">정</span><span style="display:inline-flex;justify-content:center;width:12.0px;transform:scaleX(.857)">책</span></div>
<div style="position:absolute;left:862px;top:291px;width:320px;height:32px;box-sizing:border-box;border:1px solid #d9d9d9;border-radius:4px;background:#fff"></div>
<div style="position:absolute;left:873.70px;top:300.0px;font-size:14px;line-height:14px;color:#595959;white-space:nowrap;transform:scaleX(1.0466);transform-origin:0 0;">ScaleUpPolicy-0</div>
<svg style="position:absolute;left:1160px;top:304px;" width="10" height="7" viewBox="0 0 10 7" fill="none" stroke="#bfbfbf" color="#bfbfbf"><path d="M0.5 0.5 L5 6 L9.5 0.5" stroke-width="1.1"/></svg>
<div style="position:absolute;left:1192px;top:291px;width:107px;height:32px;background:#1890ff;border-radius:4px;box-shadow:0 2px 0 rgba(0,0,0,.045)"></div>
<svg style="position:absolute;left:1209px;top:301px;" width="12" height="12" viewBox="0 0 12 12" fill="none" stroke="#fff" color="#fff"><path d="M6 0.4 V11.6 M0.2 6 H11.8" stroke-width="2"/></svg>
<div style="position:absolute;left:1229.71px;top:299.5px;font-size:14px;line-height:14px;color:#fff;white-space:nowrap;font-weight:700;transform:scaleX(1.0120);transform-origin:0 0;"><span style="display:inline-flex;justify-content:center;width:12.0px;transform:scaleX(.857)">정</span><span style="display:inline-flex;justify-content:center;width:12.0px;transform:scaleX(.857)">책</span> <span style="display:inline-flex;justify-content:center;width:12.0px;transform:scaleX(.857)">추</span><span style="display:inline-flex;justify-content:center;width:12.0px;transform:scaleX(.857)">가</span></div>
<div style="position:absolute;left:1309px;top:291px;width:106px;height:32px;background:#f5222d;border-radius:4px;box-shadow:0 2px 0 rgba(0,0,0,.045)"></div>
<svg style="position:absolute;left:1325px;top:300px;" width="14" height="14" viewBox="0 0 14 14" fill="none" stroke="#fff" color="#fff"><path d="M0.9 2.9 H12.9 M3.2 2.9 L3.2 1.7 Q3.2 1.2 3.7 1.2 H10.1 Q10.6 1.2 10.6 1.7 V2.9 M2.4 3.1 L3 12.4 H10.8 L11.4 3.1" stroke-width="1.25" stroke-linejoin="round"/></svg>
<div style="position:absolute;left:1346.01px;top:299.5px;font-size:14px;line-height:14px;color:#fff;white-space:nowrap;font-weight:700;transform:scaleX(1.0221);transform-origin:0 0;"><span style="display:inline-flex;justify-content:center;width:12.0px;transform:scaleX(.857)">정</span><span style="display:inline-flex;justify-content:center;width:12.0px;transform:scaleX(.857)">책</span> <span style="display:inline-flex;justify-content:center;width:12.0px;transform:scaleX(.857)">삭</span><span style="display:inline-flex;justify-content:center;width:12.0px;transform:scaleX(.857)">제</span></div>
<div style="position:absolute;left:773px;top:347px;width:1102px;height:1px;background:#e8e8e8"></div>
<div style="position:absolute;left:772.01px;top:375.5px;font-size:14px;line-height:14px;color:#595959;white-space:nowrap;font-weight:700;transform:scaleX(1.0011);transform-origin:0 0;"><span style="display:inline-flex;justify-content:center;width:12.0px;transform:scaleX(.857)">이</span><span style="display:inline-flex;justify-content:center;width:12.0px;transform:scaleX(.857)">름</span></div>
<svg style="position:absolute;left:799px;top:376px;" width="14" height="14" viewBox="0 0 14 14" fill="none" stroke="#595959" color="#595959"><circle cx="7" cy="7" r="6.2" stroke-width="1.05"/><path d="M7 6 V10.6" stroke-width="1.2"/><circle cx="7" cy="4.1" r="0.65" fill="currentColor" stroke="none"/></svg>
<svg style="position:absolute;left:1052.4px;top:376.8px;" width="8" height="8" viewBox="0 0 8 8" fill="none" stroke="#f5222d" color="#f5222d"><path d="M4 1.3 V6.7 M1.66 2.65 L6.34 5.35 M1.66 5.35 L6.34 2.65" stroke-width="1.4" stroke-linecap="round"/></svg>
<div style="position:absolute;left:1064.00px;top:375.8px;font-size:14px;line-height:14px;color:#595959;white-space:nowrap;font-weight:700;transform:scaleX(1.0365);transform-origin:0 0;"><span style="display:inline-flex;justify-content:center;width:12.0px;transform:scaleX(.857)">기</span><span style="display:inline-flex;justify-content:center;width:12.0px;transform:scaleX(.857)">간</span>(<span style="display:inline-flex;justify-content:center;width:12.0px;transform:scaleX(.857)">초</span>)</div>
<svg style="position:absolute;left:1115px;top:376px;" width="14" height="14" viewBox="0 0 14 14" fill="none" stroke="#595959" color="#595959"><circle cx="7" cy="7" r="6.2" stroke-width="1.05"/><path d="M7 6 V10.6" stroke-width="1.2"/><circle cx="7" cy="4.1" r="0.65" fill="currentColor" stroke="none"/></svg>
<svg style="position:absolute;left:1333.2px;top:376.8px;" width="8" height="8" viewBox="0 0 8 8" fill="none" stroke="#f5222d" color="#f5222d"><path d="M4 1.3 V6.7 M1.66 2.65 L6.34 5.35 M1.66 5.35 L6.34 2.65" stroke-width="1.4" stroke-linecap="round"/></svg>
<div style="position:absolute;left:1346.00px;top:375.8px;font-size:14px;line-height:14px;color:#595959;white-space:nowrap;font-weight:700;transform:scaleX(1.0233);transform-origin:0 0;">Quiet <span style="display:inline-flex;justify-content:center;width:12.0px;transform:scaleX(.857)">시</span><span style="display:inline-flex;justify-content:center;width:12.0px;transform:scaleX(.857)">간</span>(<span style="display:inline-flex;justify-content:center;width:12.0px;transform:scaleX(.857)">초</span>)</div>
<svg style="position:absolute;left:1436px;top:376px;" width="14" height="14" viewBox="0 0 14 14" fill="none" stroke="#595959" color="#595959"><circle cx="7" cy="7" r="6.2" stroke-width="1.05"/><path d="M7 6 V10.6" stroke-width="1.2"/><circle cx="7" cy="4.1" r="0.65" fill="currentColor" stroke="none"/></svg>
<div style="position:absolute;left:1614.70px;top:375.2px;font-size:14px;line-height:14px;color:#595959;white-space:nowrap;font-weight:700;transform:scaleX(1.0000);transform-origin:0 0;"><span style="display:inline-flex;justify-content:center;width:12.0px;transform:scaleX(.857)">동</span><span style="display:inline-flex;justify-content:center;width:12.0px;transform:scaleX(.857)">작</span></div>
<div style="position:absolute;left:773px;top:394px;width:260px;height:32px;box-sizing:border-box;border:1px solid #d9d9d9;border-radius:4px;background:#f5f5f5"></div>
<div style="position:absolute;left:1053px;top:394px;width:261px;height:32px;box-sizing:border-box;border:1px solid #d9d9d9;border-radius:4px;background:#f5f5f5"></div>
<div style="position:absolute;left:1334px;top:394px;width:260px;height:32px;box-sizing:border-box;border:1px solid #d9d9d9;border-radius:4px;background:#f5f5f5"></div>
<div style="position:absolute;left:783.91px;top:402.8px;font-size:14px;line-height:14px;color:#bfbfbf;white-space:nowrap;transform:scaleX(1.0466);transform-origin:0 0;">ScaleUpPolicy-0</div>
<div style="position:absolute;left:1066.00px;top:403.0px;font-size:14px;line-height:14px;color:#bfbfbf;white-space:nowrap;transform:scaleX(1.0295);transform-origin:0 0;">30</div>
<div style="position:absolute;left:1346.81px;top:403.0px;font-size:14px;line-height:14px;color:#bfbfbf;white-space:nowrap;transform:scaleX(0.9951);transform-origin:0 0;">30</div>
<div style="position:absolute;left:1614px;top:394px;width:261px;height:32px;background:#1890ff;border-radius:4px;box-shadow:0 2px 0 rgba(0,0,0,.045)"></div>
<svg style="position:absolute;left:1723px;top:403px;" width="14" height="14" viewBox="0 0 14 14" fill="none" stroke="#fff" color="#fff"><path d="M1.9 10.4 L2.3 8 L7.9 2.4 L9.9 4.4 L4.3 10 Z" stroke-width="1.2" stroke-linejoin="round"/><path d="M0.6 12.5 H11.5" stroke-width="1.2"/></svg>
<div style="position:absolute;left:1743.81px;top:402.0px;font-size:14px;line-height:14px;color:#fff;white-space:nowrap;font-weight:700;transform:scaleX(1.0000);transform-origin:0 0;"><span style="display:inline-flex;justify-content:center;width:12.0px;transform:scaleX(.857)">편</span><span style="display:inline-flex;justify-content:center;width:12.0px;transform:scaleX(.857)">집</span></div>
<div style="position:absolute;left:773px;top:450px;width:1102px;height:1px;background:#e8e8e8"></div>
<div style="position:absolute;left:771.77px;top:478.3px;font-size:14px;line-height:14px;color:#595959;white-space:nowrap;transform:scaleX(1.0716);transform-origin:0 0;"><span style="display:inline-flex;justify-content:center;width:12.0px;transform:scaleX(.857)">조</span><span style="display:inline-flex;justify-content:center;width:12.0px;transform:scaleX(.857)">건</span></div>
<svg style="position:absolute;left:799px;top:479px;" width="14" height="14" viewBox="0 0 14 14" fill="none" stroke="#595959" color="#595959"><circle cx="7" cy="7" r="6.2" stroke-width="1.05"/><path d="M7 6 V10.6" stroke-width="1.2"/><circle cx="7" cy="4.1" r="0.65" fill="currentColor" stroke="none"/></svg>
<div style="position:absolute;left:773px;top:502px;width:1102px;height:38px;background:#fafafa;border-radius:4px 4px 0 0"></div>
<div style="position:absolute;left:773px;top:540px;width:1102px;height:1px;background:#f0f0f0"></div>
<div style="position:absolute;left:1323px;top:510px;width:1px;height:22px;background:#f0f0f0"></div>
<div style="position:absolute;left:1531px;top:510px;width:1px;height:22px;background:#f0f0f0"></div>
<div style="position:absolute;left:1667px;top:510px;width:1px;height:22px;background:#f0f0f0"></div>
<div style="position:absolute;left:780.70px;top:513.4px;font-size:14px;line-height:14px;color:#262626;white-space:nowrap;font-weight:700;transform:scaleX(1.0144);transform-origin:0 0;"><span style="display:inline-flex;justify-content:center;width:12.0px;transform:scaleX(.857)">카</span><span style="display:inline-flex;justify-content:center;width:12.0px;transform:scaleX(.857)">운</span><span style="display:inline-flex;justify-content:center;width:12.0px;transform:scaleX(.857)">터</span></div>
<div style="position:absolute;left:1332.00px;top:513.2px;font-size:14px;line-height:14px;color:#262626;white-space:nowrap;font-weight:700;transform:scaleX(0.9861);transform-origin:0 0;"><span style="display:inline-flex;justify-content:center;width:12.0px;transform:scaleX(.857)">관</span><span style="display:inline-flex;justify-content:center;width:12.0px;transform:scaleX(.857)">계</span> <span style="display:inline-flex;justify-content:center;width:12.0px;transform:scaleX(.857)">연</span><span style="display:inline-flex;justify-content:center;width:12.0px;transform:scaleX(.857)">산</span><span style="display:inline-flex;justify-content:center;width:12.0px;transform:scaleX(.857)">자</span></div>
<div style="position:absolute;left:1540.00px;top:513.2px;font-size:14px;line-height:14px;color:#262626;white-space:nowrap;font-weight:700;transform:scaleX(0.9730);transform-origin:0 0;"><span style="display:inline-flex;justify-content:center;width:12.0px;transform:scaleX(.857)">임</span><span style="display:inline-flex;justify-content:center;width:12.0px;transform:scaleX(.857)">계</span><span style="display:inline-flex;justify-content:center;width:12.0px;transform:scaleX(.857)">값</span></div>
<div style="position:absolute;left:1674.60px;top:513.2px;font-size:14px;line-height:14px;color:#262626;white-space:nowrap;font-weight:700;transform:scaleX(1.0684);transform-origin:0 0;"><span style="display:inline-flex;justify-content:center;width:12.0px;transform:scaleX(.857)">작</span><span style="display:inline-flex;justify-content:center;width:12.0px;transform:scaleX(.857)">업</span></div>
<div style="position:absolute;left:781.00px;top:558.0px;font-size:14px;line-height:14px;color:#595959;white-space:nowrap;transform:scaleX(1.0238);transform-origin:0 0;">VM CPU - average percentage</div>
<div style="position:absolute;left:1331.00px;top:557.0px;font-size:14px;line-height:14px;color:#595959;white-space:nowrap;transform:scaleX(1.0000);transform-origin:0 0;"><span style="display:inline-flex;justify-content:center;width:12.0px;transform:scaleX(.857)">초</span><span style="display:inline-flex;justify-content:center;width:12.0px;transform:scaleX(.857)">과</span></div>
<div style="position:absolute;left:1540.70px;top:558.0px;font-size:14px;line-height:14px;color:#595959;white-space:nowrap;transform:scaleX(0.9939);transform-origin:0 0;">75</div>
<div style="position:absolute;left:1676px;top:549px;width:32px;height:32px;box-sizing:border-box;border:1px solid #d9d9d9;border-radius:50%;background:#fff"></div>
<svg style="position:absolute;left:1684px;top:557px;" width="16" height="16" viewBox="0 0 16 16" fill="none" stroke="#595959" color="#595959"><path d="M3.8 12.3 L4.3 9.4 L10.8 2.9 L13.2 5.3 L6.7 11.8 Z" stroke-width="1.25" stroke-linejoin="round"/><path d="M1.8 14.8 H14.4" stroke-width="1.3"/></svg>
<div style="position:absolute;left:1708px;top:549px;width:32px;height:32px;background:#f5222d;border-radius:50%"></div>
<svg style="position:absolute;left:1717px;top:558px;" width="14" height="14" viewBox="0 0 14 14" fill="none" stroke="#fff" color="#fff"><path d="M0.9 2.9 H12.9 M3.2 2.9 L3.2 1.7 Q3.2 1.2 3.7 1.2 H10.1 Q10.6 1.2 10.6 1.7 V2.9 M2.4 3.1 L3 12.4 H10.8 L11.4 3.1" stroke-width="1.25" stroke-linejoin="round"/></svg>
<div style="position:absolute;left:773px;top:589px;width:1102px;height:1px;background:#f0f0f0"></div>
<div style="position:absolute;left:773px;top:614px;width:1102px;height:1px;background:#e8e8e8"></div>
<svg style="position:absolute;left:772px;top:643.8px;" width="8" height="8" viewBox="0 0 8 8" fill="none" stroke="#f5222d" color="#f5222d"><path d="M4 1.3 V6.7 M1.66 2.65 L6.34 5.35 M1.66 5.35 L6.34 2.65" stroke-width="1.4" stroke-linecap="round"/></svg>
<div style="position:absolute;left:784.41px;top:642.2px;font-size:14px;line-height:14px;color:#595959;white-space:nowrap;font-weight:700;transform:scaleX(1.0005);transform-origin:0 0;"><span style="display:inline-flex;justify-content:center;width:12.0px;transform:scaleX(.857)">카</span><span style="display:inline-flex;justify-content:center;width:12.0px;transform:scaleX(.857)">운</span><span style="display:inline-flex;justify-content:center;width:12.0px;transform:scaleX(.857)">터</span></div>
<svg style="position:absolute;left:822px;top:643px;" width="14" height="14" viewBox="0 0 14 14" fill="none" stroke="#595959" color="#595959"><circle cx="7" cy="7" r="6.2" stroke-width="1.05"/><path d="M7 6 V10.6" stroke-width="1.2"/><circle cx="7" cy="4.1" r="0.65" fill="currentColor" stroke="none"/></svg>
<svg style="position:absolute;left:1052.4px;top:643.8px;" width="8" height="8" viewBox="0 0 8 8" fill="none" stroke="#f5222d" color="#f5222d"><path d="M4 1.3 V6.7 M1.66 2.65 L6.34 5.35 M1.66 5.35 L6.34 2.65" stroke-width="1.4" stroke-linecap="round"/></svg>
<div style="position:absolute;left:1065.00px;top:642.2px;font-size:14px;line-height:14px;color:#595959;white-space:nowrap;font-weight:700;transform:scaleX(0.9939);transform-origin:0 0;"><span style="display:inline-flex;justify-content:center;width:12.0px;transform:scaleX(.857)">관</span><span style="display:inline-flex;justify-content:center;width:12.0px;transform:scaleX(.857)">계</span> <span style="display:inline-flex;justify-content:center;width:12.0px;transform:scaleX(.857)">연</span><span style="display:inline-flex;justify-content:center;width:12.0px;transform:scaleX(.857)">산</span><span style="display:inline-flex;justify-content:center;width:12.0px;transform:scaleX(.857)">자</span></div>
<svg style="position:absolute;left:1131px;top:643px;" width="14" height="14" viewBox="0 0 14 14" fill="none" stroke="#595959" color="#595959"><circle cx="7" cy="7" r="6.2" stroke-width="1.05"/><path d="M7 6 V10.6" stroke-width="1.2"/><circle cx="7" cy="4.1" r="0.65" fill="currentColor" stroke="none"/></svg>
<svg style="position:absolute;left:1333.2px;top:643.8px;" width="8" height="8" viewBox="0 0 8 8" fill="none" stroke="#f5222d" color="#f5222d"><path d="M4 1.3 V6.7 M1.66 2.65 L6.34 5.35 M1.66 5.35 L6.34 2.65" stroke-width="1.4" stroke-linecap="round"/></svg>
<div style="position:absolute;left:1345.00px;top:642.2px;font-size:14px;line-height:14px;color:#595959;white-space:nowrap;font-weight:700;transform:scaleX(1.0143);transform-origin:0 0;"><span style="display:inline-flex;justify-content:center;width:12.0px;transform:scaleX(.857)">임</span><span style="display:inline-flex;justify-content:center;width:12.0px;transform:scaleX(.857)">계</span><span style="display:inline-flex;justify-content:center;width:12.0px;transform:scaleX(.857)">값</span></div>
<svg style="position:absolute;left:1384.3px;top:643px;" width="14" height="14" viewBox="0 0 14 14" fill="none" stroke="#595959" color="#595959"><circle cx="7" cy="7" r="6.2" stroke-width="1.05"/><path d="M7 6 V10.6" stroke-width="1.2"/><circle cx="7" cy="4.1" r="0.65" fill="currentColor" stroke="none"/></svg>
<div style="position:absolute;left:1614.70px;top:642.2px;font-size:14px;line-height:14px;color:#595959;white-space:nowrap;font-weight:700;transform:scaleX(1.0000);transform-origin:0 0;"><span style="display:inline-flex;justify-content:center;width:12.0px;transform:scaleX(.857)">동</span><span style="display:inline-flex;justify-content:center;width:12.0px;transform:scaleX(.857)">작</span></div>
<div style="position:absolute;left:773px;top:661px;width:260px;height:32px;box-sizing:border-box;border:1px solid #d9d9d9;border-radius:4px;background:#fff"></div>
<svg style="position:absolute;left:1010px;top:673px;" width="10" height="7" viewBox="0 0 10 7" fill="none" stroke="#bfbfbf" color="#bfbfbf"><path d="M0.5 0.5 L5 6 L9.5 0.5" stroke-width="1.1"/></svg>
<div style="position:absolute;left:1053px;top:661px;width:261px;height:32px;box-sizing:border-box;border:1px solid #d9d9d9;border-radius:4px;background:#fff"></div>
<div style="position:absolute;left:1064.49px;top:669.4px;font-size:14px;line-height:14px;color:#595959;white-space:nowrap;transform:scaleX(1.0235);transform-origin:0 0;"><span style="display:inline-flex;justify-content:center;width:12.0px;transform:scaleX(.857)">초</span><span style="display:inline-flex;justify-content:center;width:12.0px;transform:scaleX(.857)">과</span></div>
<svg style="position:absolute;left:1291px;top:673px;" width="10" height="7" viewBox="0 0 10 7" fill="none" stroke="#bfbfbf" color="#bfbfbf"><path d="M0.5 0.5 L5 6 L9.5 0.5" stroke-width="1.1"/></svg>
<div style="position:absolute;left:1334px;top:661px;width:260px;height:32px;box-sizing:border-box;border:1px solid #d9d9d9;border-radius:4px;background:#fff"></div>
<div style="position:absolute;left:1614px;top:661px;width:261px;height:32px;background:#1890ff;border-radius:4px;box-shadow:0 2px 0 rgba(0,0,0,.045)"></div>
<svg style="position:absolute;left:1709px;top:671px;" width="12" height="12" viewBox="0 0 12 12" fill="none" stroke="#fff" color="#fff"><path d="M6 0.4 V11.6 M0.2 6 H11.8" stroke-width="2"/></svg>
<div style="position:absolute;left:1729.70px;top:669.5px;font-size:14px;line-height:14px;color:#fff;white-space:nowrap;font-weight:700;transform:scaleX(1.0028);transform-origin:0 0;"><span style="display:inline-flex;justify-content:center;width:12.0px;transform:scaleX(.857)">상</span><span style="display:inline-flex;justify-content:center;width:12.0px;transform:scaleX(.857)">태</span> <span style="display:inline-flex;justify-content:center;width:12.0px;transform:scaleX(.857)">추</span><span style="display:inline-flex;justify-content:center;width:12.0px;transform:scaleX(.857)">가</span></div>
<div style="position:absolute;left:1872px;top:850px;width:40px;height:40px;background:#a9a9a9;border-radius:5px 0 0 5px"></div>
<svg style="position:absolute;left:1884px;top:862px;" width="16" height="16" viewBox="0 0 16 16" fill="none" stroke="#fff" color="#fff"><rect x="1.5" y="3.5" width="13" height="10" rx="0.6" stroke-width="1.2"/><path d="M4.5 2 V4.8 M8 2 V4.8 M11.5 2 V4.8 M3.8 8 H6.5 M3.8 10.5 H6.5 M8.3 8.3 L10 10.5 L12.5 7.3" stroke-width="1.1" stroke-linecap="round"/></svg>
<div style="position:absolute;left:1872px;top:890px;width:40px;height:40px;background:#1890ff;border-radius:5px 0 0 5px"></div>
<svg style="position:absolute;left:1884px;top:902px;" width="16" height="16" viewBox="0 0 16 16" fill="none" stroke="#fff" color="#fff"><path d="M5.50 2.88 L6.23 0.92 L9.77 0.92 L10.50 2.88 L11.19 3.27 L13.25 2.93 L15.02 5.99 L13.69 7.60 L13.69 8.40 L15.02 10.01 L13.25 13.07 L11.19 12.73 L10.50 13.12 L9.77 15.08 L6.23 15.08 L5.50 13.12 L4.81 12.73 L2.75 13.07 L0.98 10.01 L2.31 8.40 L2.31 7.60 L0.98 5.99 L2.75 2.93 L4.81 3.27 Z" stroke-width="1.35" stroke-linejoin="round"/><circle cx="8" cy="8" r="2.4" stroke-width="1.35"/></svg>
</body></html>
